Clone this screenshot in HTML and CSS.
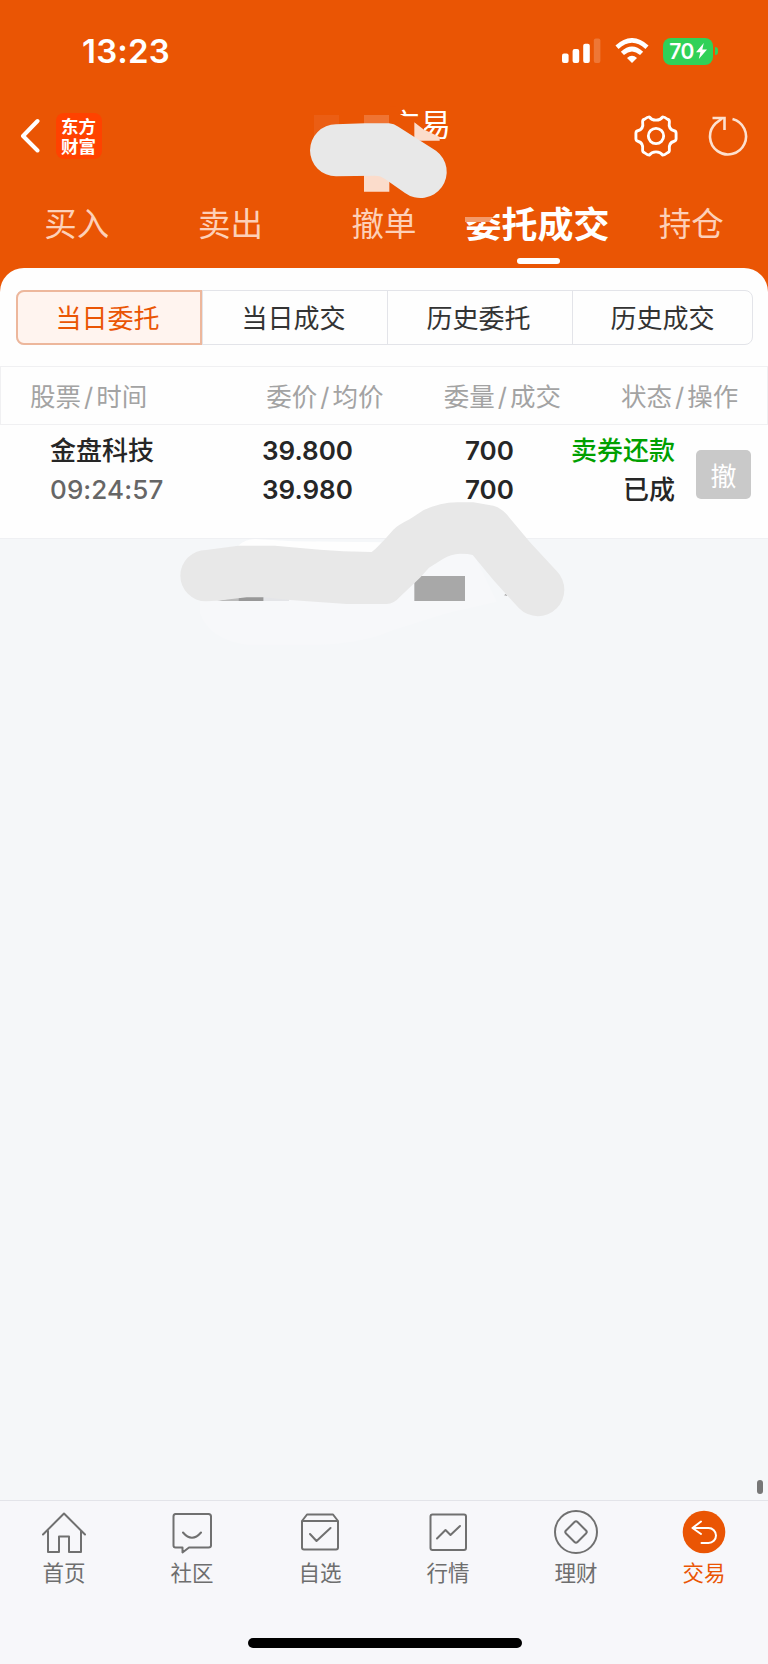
FILE: index.html
```
<!DOCTYPE html>
<html lang="zh-CN">
<head>
  <meta charset="UTF-8">
  <meta name="viewport" content="width=device-width, initial-scale=1.0">
  <title>委托成交</title>
  <link rel="stylesheet" href="styles.css">
</head>
<body>
  <header class="top">
    <div class="status-bar">
      <div class="time">13:23</div>
      <div class="status-icons">
        <svg class="signal" width="39" height="26" viewBox="0 0 39 26" fill="#fff">
          <rect x="0" y="15.5" width="6.6" height="9.5" rx="2"/>
          <rect x="10.6" y="11" width="6.6" height="14" rx="2"/>
          <rect x="21.2" y="5.8" width="6.6" height="19.2" rx="2"/>
          <rect x="31.8" y="0.5" width="6.6" height="24.5" rx="2" opacity=".2"/>
        </svg>
        <svg class="wifi" width="34" height="26" viewBox="0 0 34 26" fill="none" stroke="#fff" stroke-width="4.6">
          <path d="M2 9.2Q17-4.4 32 9.2"/>
          <path d="M7.4 15.4Q17 6.600 26.600 15.4"/>
          <path d="M12 20Q17 15.3 22 20L17 25Z" fill="#fff" stroke="none"/>
        </svg>
        <div class="battery">70<svg width="11" height="16" viewBox="0 0 11 16"><path d="M7.8 0L0 9.2H4.4L2.8 16L11 6.4H6.3Z" fill="#fff"/></svg></div>
        <div class="battery-tip"></div>
      </div>
    </div>

    <div class="nav">
      <svg class="back" width="20" height="36" viewBox="0 0 20 36" fill="none" stroke="#fff" stroke-width="4" stroke-linecap="round" stroke-linejoin="round"><path d="M17.5 3L3 18L17.5 32.5"/></svg>
      <div class="logo">东方财富</div>
      <div class="title">交易</div>
      <svg class="gear" width="44" height="44" viewBox="-23 -23 46 46" fill="none" stroke="#fff" stroke-width="3" stroke-linejoin="round">
        <path d="M-7-20Q-9-20-12-17.5Q-14-17-14-15C-13-9-15-6.500-19-5.500Q-21-5-21-3V3Q-21 5-19 5.500C-15 6.500-13 9-14 15Q-14 17-12 17.500Q-9 20-7 20C-4 15.500 4 15.500 7 20Q9 20 12 17.500Q14 17 14 15C13 9 15 6.500 19 5.500Q21 5 21 3V-3Q21-5 19-5.500C15-6.500 13-9 14-15Q14-17 12-17.500Q9-20 7-20C4-15.500-4-15.500-7-20Z"/>
        <circle r="8"/>
      </svg>
      <svg class="refresh" width="42" height="42" viewBox="0 0 42 42" fill="none" stroke="#fde0cf" stroke-width="2.6">
        <path d="M25.500 4A18 18 0 1 1 8.500 8.500L15 3.500"/>
        <path d="M5.500 3H17.500V15"/>
      </svg>
    </div>

    <nav class="tabs">
      <a>买入</a>
      <a>卖出</a>
      <a>撤单</a>
      <a class="active">委托成交</a>
      <a>持仓</a>
    </nav>
  </header>

  <main class="panel">
    <div class="segments">
      <div class="seg on">当日委托</div>
      <div class="seg">当日成交</div>
      <div class="seg">历史委托</div>
      <div class="seg">历史成交</div>
    </div>

    <div class="table-head">
      <span>股票<i>/</i>时间</span>
      <span>委价<i>/</i>均价</span>
      <span>委量<i>/</i>成交</span>
      <span>状态<i>/</i>操作</span>
    </div>

    <div class="order">
      <div class="name"><b>金盘科技</b><span>09:24:57</span></div>
      <div class="price"><b>39.800</b><b>39.980</b></div>
      <div class="amount"><b>700</b><b>700</b></div>
      <div class="state"><b class="green">卖券还款</b><b>已成</b></div>
      <button>撤</button>
    </div>
  </main>

  <footer class="tabbar">
    <a>
      <svg viewBox="-22 -22 44 44"><path d="M-21 2.500L0-18.500L21 2.500M-16-1V20H-5V4.500H5V20H17V-1"/></svg>
      首页
    </a>
    <a>
      <svg viewBox="-22 -22 44 44"><path d="M-16.500-18H16.500Q19-18 19-15.500V13.500Q19 15.500 16.500 15.500H-3L-9.500 20.500V15.500H-16.500Q-18.500 15.500-18.500 13.500V-15.500Q-18.500-18-16.500-18ZM-9 .5Q0 11 9 .5"/></svg>
      社区
    </a>
    <a>
      <svg viewBox="-22 -22 44 44"><path d="M-18-11L-13-17.500H13L18-11M-18-11H18V15.500Q18 17.500 16 17.500H-16Q-18 17.500-18 15.500ZM-10 2L-3.500 9L10.500-4"/></svg>
      自选
    </a>
    <a>
      <svg viewBox="-22 -22 44 44"><rect x="-17.500" y="-17.500" width="35.500" height="35.500" rx="2"/><path d="M-11 6.500L-2.500-2L2.500 3L12-6"/></svg>
      行情
    </a>
    <a>
      <svg viewBox="-22 -22 44 44"><circle r="21"/><path d="M-1.500-10Q0-11.500 1.500-10L10-1.500Q11.500 0 10 1.500L1.500 10Q0 11.500-1.500 10L-10 1.500Q-11.500 0-10-1.500Z"/></svg>
      理财
    </a>
    <a class="current">
      <svg viewBox="-22 -22 44 44"><circle r="21.300" fill="#ea5504" stroke="none"/><path stroke="#fff" d="M-3-10.500L-11.500-4L-3 2M-11.500-4H4.500A7.500 7.500 0 0 1 4.500 11H-2.500"/></svg>
      交易
    </a>
    <div class="home-bar"></div>
  </footer>
  <div class="scroll-thumb"></div>

  <!-- marker strokes over the account details -->
  <svg class="marker title-marker" viewBox="0 0 540 390">
    <path fill="#ea5504" d="M300 50H318V66L345 80H380L402 98V160H300Z"/>
    <path fill="#eb5e14" d="M72 75H147V150H72Z"/>
    <path fill="#ef7433" d="M222 75H297V150H222Z"/>
    <path fill="#fbdccb" d="M222 220H298V305H222ZM373 97L400 118L449 141V152H373Z"/>
    <path fill="#e8e8e8" d="M138 103L225 100H297Q312 101 325 110L438 182A78 78 0 0 1 345 309L285 267Q272 257 255 257L138 259A78 78 0 0 1 138 103Z"/>
  </svg>
  <svg class="marker tab-marker" viewBox="0 0 40 24"><path fill="#ea5504" d="M0 0H36V9L30 15H0Z"/><path fill="#f39a6b" d="M3 14H31L27 19H3Z"/></svg>
  <svg class="marker row-marker" viewBox="0 0 1290 540">
    <path fill="#f7f8fa" d="M120 360V400Q150 480 260 494H480Q610 490 700 450L860 400L1010 365L940 220H790L600 360Z"/>
    <path fill="#fefefe" d="M235 197Q255 178 285 177L400 184L665 187L635 220H235Z"/>
    <path fill="#a8a8a8" d="M763 288H915V363H763ZM1032 346L1038 341L1042 348Z"/>
    <path fill="#bbb" d="M170 363L235 350V363Z"/>
    <path fill="#989898" d="M235 345H311V363H235Z"/>
    <path fill="#e4e5e8" d="M311 345H387V363H311Z"/>
    <path fill="#e8e8e8" d="M138 210L235 197H345L480 209L550 214L635 216Q652 204 700 149Q712 136 750 117L790 91Q840 68 890 67L940 67L1000 77Q1020 82 1040 103L1110 187L1190 273A78 78 0 0 1 1077 385L1000 300L938 225Q925 221 900 221Q872 222 850 236L807 263L780 293L720 350Q702 371 680 372H560L390 360L312 352H260L170 362L138 364A77 77 0 0 1 138 210Z"/>
  </svg>
</body>
</html>
```

FILE: styles.css
```
:root {
  --orange: #ea5504;
  --line: #e3e4e9;
  --ink: #262626;
}

* { box-sizing: border-box; }

body {
  margin: 0;
  height: 1664px;
  position: relative;
  display: flex;
  flex-direction: column;
  overflow: hidden;
  background: #f5f7f9;
  color: var(--ink);
  font-family: Inter, "Noto Sans CJK SC", sans-serif;
}

/* Header */
.top { height: 292px; background: var(--orange); color: #fff; }
.status-bar { height: 102px; padding: 0 50px 0 82px; display: flex; justify-content: space-between; align-items: center; }
.time { font-size: 33px; font-weight: 600; letter-spacing: 0.2px; }
.status-icons { display: flex; align-items: center; }
.wifi { margin-left: 14px; }
.battery { width: 50px; height: 27px; margin-left: 14px; border-radius: 8px; background: #30d158; display: flex; align-items: center; justify-content: center; gap: 2px; font-size: 21px; font-weight: 600; letter-spacing: -0.5px; }
.battery-tip { width: 3px; height: 8px; margin-left: 2px; border-radius: 0 3px 3px 0; background: #30d158; }

.nav { height: 68px; padding: 0 19px 0 20px; display: flex; align-items: center; }
.logo { width: 46px; height: 46px; margin-left: 16px; padding: 3px 5px 0; border-radius: 8px; background: #ff4200; font-family: "Noto Sans CJK SC", sans-serif; font-size: 17.5px; font-weight: 700; line-height: 19.5px; }
.title { margin: -23px auto 0 287px; font-size: 31px; line-height: 32px; }
.gear { margin-right: 29px; }

.tabs { height: 98px; display: flex; }
.tabs a { flex: 1; display: flex; justify-content: center; align-items: center; position: relative; height: 103px; font-size: 32.5px; font-weight: 400; white-space: nowrap; color: #fdd0b8; }
.tabs .active { font-size: 36px; font-weight: 700; color: #fff; }
.tabs .active::after { content: ""; position: absolute; left: 56px; top: 88px; width: 43px; height: 6px; border-radius: 3px; background: #fff; }

/* Orders */
.panel { height: 271px; margin-top: -24px; padding-top: 22px; border-radius: 24px 24px 0 0; background: #fefefe; position: relative; border-bottom: 1px solid #eff0f3; }
.segments { height: 55px; margin: 0 15px 0 16px; display: grid; grid-template-columns: 185px 185px 185px 1fr; border: 1px solid var(--line); border-radius: 8px; font-size: 26px; }
.seg { padding: 0 3px 3px 0; display: flex; align-items: center; justify-content: center; border-left: 1px solid var(--line); color: #333; }
.seg:last-child { padding-right: 0; }
.seg.on { margin: -1px 0 -1px -1px; border: 2px solid #edb79c; border-radius: 8px 0 0 8px; background: #fff4ef; color: var(--orange); }

.table-head { height: 59px; margin-top: 21px; padding: 0 28px 2px 29px; border: 1px solid #f0f0f2; display: flex; align-items: center; justify-content: space-between; font-size: 25.5px; color: #a3a3a3; }
.table-head span { width: 118px; white-space: nowrap; }
.table-head i { margin: 0 3px; font-style: normal; }
.table-head span:nth-child(2) { margin-left: 59px; }

.order { height: 111px; padding: 6px 16px 0 50px; display: flex; font-size: 26px; line-height: 39px; }
.order b, .order span { display: block; font-weight: 600; }
.order .name { width: 212px; }
.name span { font-weight: 500; color: #666; letter-spacing: 0.1px; }
.price { width: 203px; }
.amount { width: 70px; }
.state { width: 140px; text-align: right; }
.order .name b, .order .state b { font-weight: 500; }
.order .green { color: #00a000; }
.order button { width: 55px; height: 49px; margin: 19px 0 0 21px; padding: 0; border: 0; border-radius: 5px; background: #c9c9c9; color: #fff; font: 400 26px/46px "Noto Sans CJK SC", sans-serif; }

/* Bottom navigation */
.tabbar { height: 164px; margin-top: auto; position: relative; display: flex; border-top: 1px solid var(--line); background: #f7f7fa; }
.tabbar a { flex: 1; padding-top: 9px; display: flex; flex-direction: column; align-items: center; font-size: 21.5px; line-height: 38px; color: #6e6e6e; }
.tabbar svg { width: 44px; height: 44px; fill: none; stroke: #707070; stroke-width: 2; stroke-linecap: round; stroke-linejoin: round; }
.tabbar .current { color: var(--orange); }
.home-bar { position: absolute; left: 248px; bottom: 16px; width: 274px; height: 10px; border-radius: 5px; background: #000; }
.scroll-thumb { position: absolute; left: 757px; top: 1480px; width: 6px; height: 14px; border-radius: 3px; background: #777; }

.marker { position: absolute; }
.title-marker { left: 290px; top: 90px; width: 180px; height: 130px; }
.tab-marker { left: 462px; top: 203px; width: 40px; height: 24px; }
.row-marker { left: 160px; top: 480px; width: 430px; height: 180px; }
```
